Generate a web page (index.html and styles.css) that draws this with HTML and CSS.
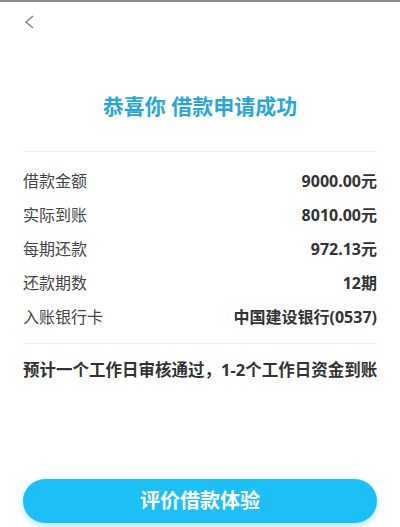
FILE: index.html
```html
<!DOCTYPE html>
<html lang="zh-CN">

<head>
    <meta charset="UTF-8">
    <meta name="viewport" content="width=device-width, initial-scale=1.0">
    <title>借款申请成功</title>
    <link rel="stylesheet" href="styles.css">
</head>

<body>
    <div class="page">
        <div class="top-bar">
            <a href="#" class="back">
                <svg width="14" height="18" viewBox="0 0 14 18">
                    <path d="M10 3 L3 9 L10 15" fill="none" stroke="#8a8a8a" stroke-width="1.6" />
                </svg>
            </a>
        </div>
        <div class="result-title">恭喜你 借款申请成功</div>
        <div class="info-list">
            <div class="info-row"><span class="label">借款金额</span><span class="value">9000.00元</span></div>
            <div class="info-row"><span class="label">实际到账</span><span class="value">8010.00元</span></div>
            <div class="info-row"><span class="label">每期还款</span><span class="value">972.13元</span></div>
            <div class="info-row"><span class="label">还款期数</span><span class="value">12期</span></div>
            <div class="info-row"><span class="label">入账银行卡</span><span class="value">中国建设银行(0537)</span></div>
        </div>
        <div class="tips">预计一个工作日审核通过，1-2个工作日资金到账</div>
        <div class="footer">
            <a href="#" class="btn">评价借款体验</a>
        </div>
    </div>
</body>

</html>
```

FILE: styles.css
```css
* {
    padding: 0;
    margin: 0;
    text-decoration: none;
    box-sizing: border-box;
}

body {
    background-color: #fff;
    font-family: "Noto Sans", "Noto Sans CJK SC", sans-serif;
    color: #333;
}

.page {
    width: 400px;
    height: 527px;
    border-top: 2px solid #8c8c8c;
    padding: 0 23px;
    display: flex;
    flex-direction: column;
}

.top-bar {
    height: 40px;
    display: flex;
    align-items: center;
}

.back {
    display: flex;
    width: 20px;
    height: 20px;
    align-items: center;
}

.result-title {
    margin-top: 51px;
    height: 26px;
    line-height: 26px;
    font-size: 21px;
    font-weight: bold;
    text-align: center;
    color: #2aa7d6;
}

.info-list {
    margin-top: 32px;
    padding: 11px 0 10px;
    border-top: 1px solid #f0f0f0;
    border-bottom: 1px solid #f0f0f0;
}

.info-row {
    display: flex;
    justify-content: space-between;
    align-items: center;
    height: 34px;
    font-size: 16px;
}

.label {
    color: #444;
}

.value {
    font-weight: bold;
    color: #333;
}

.tips {
    margin-top: 15px;
    font-size: 16.5px;
    font-weight: bold;
    color: #333;
    line-height: 22px;
    white-space: nowrap;
}

.footer {
    margin-top: auto;
    padding-bottom: 4px;
}

.btn {
    display: block;
    height: 44px;
    line-height: 44px;
    border-radius: 22px;
    background-color: #1dbff7;
    color: #fff;
    font-size: 20px;
    font-weight: bold;
    text-align: center;
    box-shadow: 0 3px 6px rgba(29, 191, 247, .35);
}
```
